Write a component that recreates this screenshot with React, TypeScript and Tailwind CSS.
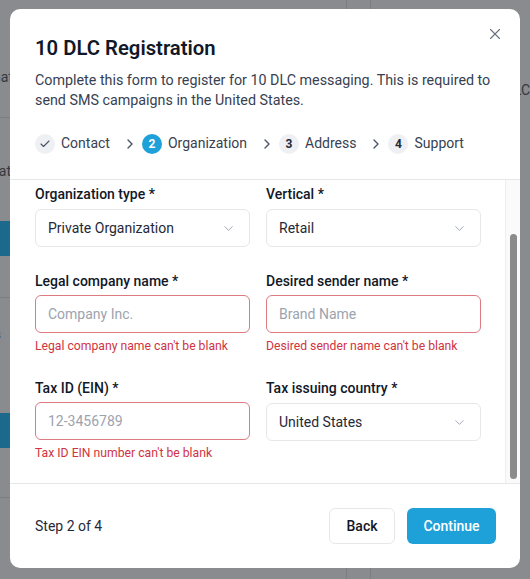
import { Check, ChevronDown, ChevronRight, X } from "lucide-react";

type Step = { label: string; state: "done" | "active" | "todo"; n: number };

const steps: Step[] = [
  { label: "Contact", state: "done", n: 1 },
  { label: "Organization", state: "active", n: 2 },
  { label: "Address", state: "todo", n: 3 },
  { label: "Support", state: "todo", n: 4 },
];

function Stepper() {
  return (
    <div className="flex items-center text-[14px] text-[#374151]">
      {steps.map((s, i) => (
        <div key={s.label} className="flex items-center">
          {i > 0 && <ChevronRight size={16} strokeWidth={2} className="ml-[12px] mr-[4px] text-[#4b5563]" />}
          <div className="flex items-center gap-[6px]">
            {s.state === "done" && (
              <span className="w-5 h-5 rounded-full bg-[#eef0f4] flex items-center justify-center">
                <Check size={12} strokeWidth={2.2} className="text-[#4b5563]" />
              </span>
            )}
            {s.state === "active" && (
              <span className="w-5 h-5 rounded-full bg-[#1ea0d8] text-white text-[12px] font-bold flex items-center justify-center">
                {s.n}
              </span>
            )}
            {s.state === "todo" && (
              <span className="w-5 h-5 rounded-full bg-[#eef0f4] text-[#1f2937] text-[12px] font-bold flex items-center justify-center">
                {s.n}
              </span>
            )}
            <span>{s.label}</span>
          </div>
        </div>
      ))}
    </div>
  );
}

function Label({ children }: { children: string }) {
  return <label className="block text-[14px] leading-5 font-medium text-[#111827]">{children}</label>;
}

function SelectField({ label, value }: { label: string; value: string }) {
  return (
    <div>
      <Label>{label}</Label>
      <div className="mt-[5px] h-[38px] rounded-md border border-[#e5e7eb] bg-white flex items-center justify-between pl-[12px] pr-[13px]">
        <span className="text-[14px] text-[#1f2937]">{value}</span>
        <ChevronDown size={15} strokeWidth={1.5} className="text-[#9ca3af]" />
      </div>
    </div>
  );
}

function ErrorField({ label, placeholder, error }: { label: string; placeholder: string; error: string }) {
  return (
    <div>
      <Label>{label}</Label>
      <div className="mt-[4px] h-[38px] rounded-md border border-[#dc7a80] bg-white flex items-center pl-[12px]">
        <span className="text-[14px] text-[#9ca3af]">{placeholder}</span>
      </div>
      <p className="mt-[5px] text-[12.2px] leading-4 text-[#d1343f]">{error}</p>
    </div>
  );
}

function Backdrop() {
  return (
    <div className="h-full flex bg-[#898b8e]" style={{ fontFamily: "Roboto, sans-serif" }}>
      <div className="w-[360px] h-full border-r border-[#7b7d81] flex flex-col text-[14px] text-[#35383c]">
        <div className="h-[118px] border-b border-[#7b7d81] flex items-end pb-[29px] -ml-[16px]">Chat</div>
        <div className="h-[180px] border-b border-[#7b7d81] flex flex-col pt-[43px] -ml-[18px]">
          <span>Chat</span>
          <span className="mt-[39px] h-[35px] w-[60px] bg-[#1c6a8b] text-[#5c8fa8] flex items-center justify-end pr-[1px] font-semibold">ve</span>
        </div>
        <div className="h-[200px] border-b border-[#7b7d81] flex flex-col pt-[26px] -ml-[14px]">
          <span>ns</span>
          <span className="mt-[68px] h-[35px] w-[60px] bg-[#1c6a8b] text-[#5c8fa8] flex items-center justify-end pr-[1px] font-semibold ml-[-4px]">ve</span>
        </div>
      </div>
      <div className="w-[25px] h-full border-r border-[#7b7d81]" />
      <div className="flex-1 h-full pt-[80px] pl-[134px] text-[14px] text-[#35383c]">DLC</div>
    </div>
  );
}

export default function App() {
  return (
    <div className="relative w-[530px] h-[579px] overflow-hidden" style={{ fontFamily: "Roboto, 'Noto Sans', sans-serif" }}>
      <Backdrop />
      <div className="absolute left-[10px] top-[9px] w-[510px] h-[559px] bg-white rounded-[10px] flex flex-col overflow-hidden">
        <div className="relative px-[25px] pt-[25px] pb-[25px] border-b border-[#e5e7eb]">
          <button className="absolute right-[16px] top-[16px] text-[#6b7280]">
            <X size={18} strokeWidth={1.5} />
          </button>
          <h2 className="text-[20.3px] leading-7 font-semibold text-[#111827]">10 DLC Registration</h2>
          <p className="mt-[8px] text-[14.3px] leading-5 text-[#374151]">
            Complete this form to register for 10 DLC messaging. This is required to send SMS campaigns in the United States.
          </p>
          <div className="mt-[23px]">
            <Stepper />
          </div>
        </div>

        <div className="flex h-[304px] border-b border-[#e5e7eb]">
          <div className="flex-1 pl-[25px] pr-[24px] pt-[4px] grid grid-cols-2 gap-x-[16px] gap-y-[24px] content-start">
            <SelectField label="Organization type *" value="Private Organization" />
            <SelectField label="Vertical *" value="Retail" />
            <ErrorField label="Legal company name *" placeholder="Company Inc." error="Legal company name can't be blank" />
            <ErrorField label="Desired sender name *" placeholder="Brand Name" error="Desired sender name can't be blank" />
            <ErrorField label="Tax ID (EIN) *" placeholder="12-3456789" error="Tax ID EIN number can't be blank" />
            <SelectField label="Tax issuing country *" value="United States" />
          </div>
          <div className="w-[15px] border-l border-[#eeeeee] bg-[#fafafa] pt-[54px] pb-[4px] flex justify-center">
            <div className="w-[7px] h-full rounded-full bg-[#8b8b8b]" />
          </div>
        </div>

        <div className="flex-1 flex items-center justify-between pl-[25px] pr-[24px]">
          <span className="text-[14px] text-[#1f2937]">Step 2 of 4</span>
          <div className="flex items-center gap-[12px]">
            <button className="h-[36px] w-[66px] rounded-md border border-[#e5e7eb] bg-white text-[14px] font-medium text-[#111827]">
              Back
            </button>
            <button className="h-[36px] w-[89px] rounded-md bg-[#1ea0d8] text-[14px] font-medium text-white">
              Continue
            </button>
          </div>
        </div>
      </div>
    </div>
  );
}
